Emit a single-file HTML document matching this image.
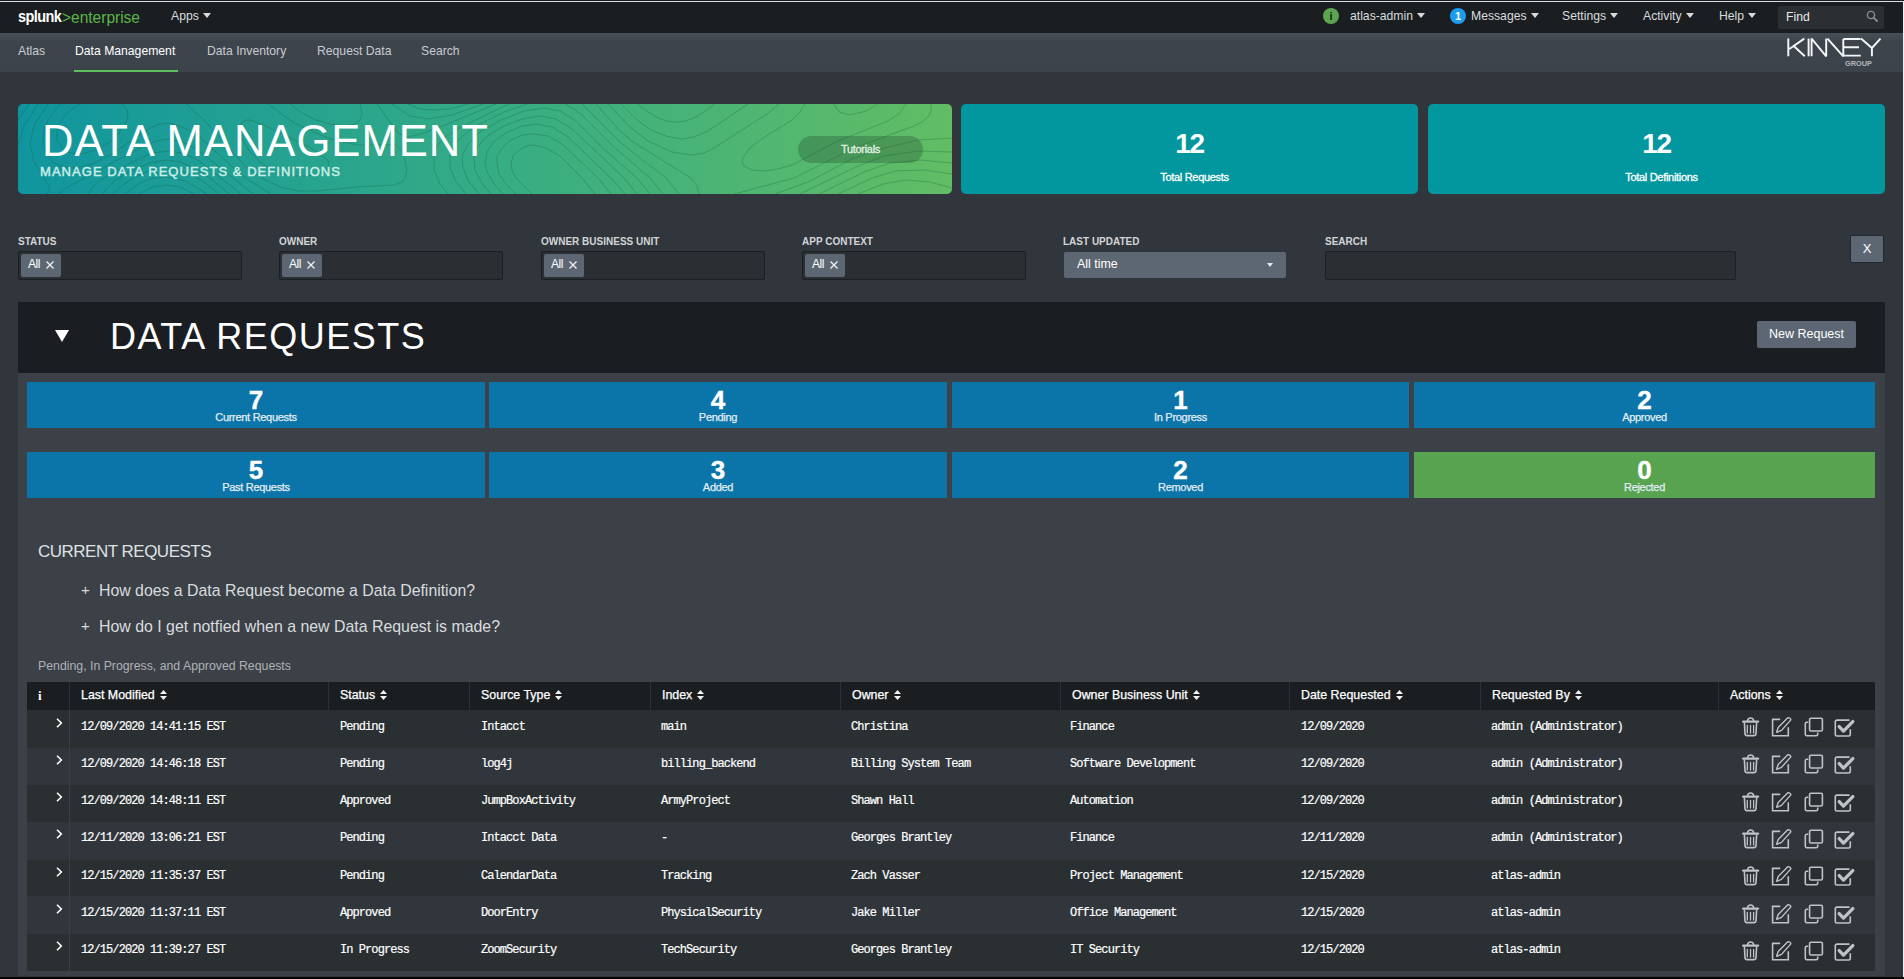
<!DOCTYPE html>
<html><head><meta charset="utf-8">
<style>
*{margin:0;padding:0;box-sizing:border-box}
html,body{width:1904px;height:979px;overflow:hidden;background:#31363c;font-family:"Liberation Sans",sans-serif;color:#fff}
.a{position:absolute;white-space:nowrap}
#topline{position:absolute;left:0;top:0;width:1904px;height:2px;background:#1a1e21}
#topline i{position:absolute;left:0;top:1px;width:1904px;height:1px;background:#dcdfe2}
#rline{position:absolute;left:1903px;top:1px;width:1px;height:976px;background:#eef0f3}
#rline i{display:none}
#botline{position:absolute;left:0;top:977px;width:1904px;height:2px;background:#030303}
#nav{position:absolute;left:0;top:2px;width:1903px;height:31px;background:#1a1e21}
#sub{position:absolute;left:0;top:33px;width:1903px;height:39px;background:linear-gradient(180deg,#464d55 0px,#434a52 5px,#3d444c 8px,#3c434b 100%)}
.nv{font-size:12.2px;color:#d9dcdf}
.caret{display:inline-block;width:0;height:0;border-left:4px solid transparent;border-right:4px solid transparent;border-top:5px solid #d8dadc;vertical-align:middle;margin-left:4px;position:relative;top:-1px}
.sn{font-size:12.2px;color:#c9ccd0;top:44px}
.flab{top:236px;font-size:10px;font-weight:bold;color:#d2d5d8;line-height:11px}
.finp{top:251px;width:224px;height:29px;background:#2b2f33;border:1px solid #1b1e22;border-radius:2px}
.chip{position:absolute;left:2px;top:2px;width:40px;height:23px;background:#5c6773;border-radius:2px;font-size:12px;color:#fff;line-height:20px;padding-left:7px;letter-spacing:-0.4px}
.chip .x{position:absolute;left:25px;top:7px}
.tile{height:46px;background:#0b74a8;text-align:center;color:#fff}
.tn{position:absolute;left:0;width:100%;top:3px;font-size:26px;font-weight:bold;line-height:30px;-webkit-text-stroke:0.4px #fff}
.tl{position:absolute;left:0;width:100%;top:29px;font-size:11px;letter-spacing:-0.3px;line-height:13px;color:#e2eef6;-webkit-text-stroke:0.25px #e2eef6}
.acc{font-size:15px;color:#d9dcdf;line-height:18px}
.th{top:687.5px;font-size:12.4px;color:#fff;line-height:14px;-webkit-text-stroke:0.25px #fff}
.th .si{margin-left:5px;vertical-align:-1px}
.td{font-family:"Liberation Mono",monospace;font-size:12px;letter-spacing:-0.93px;color:#fff;line-height:14px;-webkit-text-stroke:0.2px #fff}
</style></head><body>
<div id="topline"><i></i></div>
<div id="nav"></div>
<div id="sub"></div>

<!-- navbar -->
<div class="a" style="left:18px;top:7px;font-size:14.5px;font-weight:bold;letter-spacing:-0.6px;color:#fff;transform:scaleY(1.12);transform-origin:0 0">splunk</div>
<div class="a" style="left:62px;top:7px;font-size:15.5px;color:#5cb54a;letter-spacing:0px;transform:scaleY(1.12);transform-origin:0 0">&gt;enterprise</div>
<div class="a nv" style="left:171px;top:9px">Apps<span class="caret"></span></div>

<div class="a" style="left:1323px;top:8px;width:16px;height:16px;border-radius:50%;background:#5ca64f;font-size:11px;font-weight:bold;color:#1a1c20;text-align:center;line-height:16px">i</div>
<div class="a nv" style="left:1350px;top:9px">atlas-admin<span class="caret"></span></div>
<div class="a" style="left:1450px;top:8px;width:16px;height:16px;border-radius:50%;background:#1a9cf0;font-size:11px;font-weight:bold;color:#fff;text-align:center;line-height:16px">1</div>
<div class="a nv" style="left:1471px;top:9px">Messages<span class="caret"></span></div>
<div class="a nv" style="left:1562px;top:9px">Settings<span class="caret"></span></div>
<div class="a nv" style="left:1643px;top:9px">Activity<span class="caret"></span></div>
<div class="a nv" style="left:1719px;top:9px">Help<span class="caret"></span></div>
<div class="a" style="left:1778px;top:6px;width:106px;height:23px;background:#2b2f33;border-radius:2px"></div>
<div class="a nv" style="left:1786px;top:10px;color:#e8e8e8">Find</div>
<svg class="a" style="left:1866px;top:10px" width="13" height="12" viewBox="0 0 13 12"><circle cx="5" cy="5" r="3.6" fill="none" stroke="#8a8e93" stroke-width="1.4"/><path d="M7.6 7.6 L11 11" stroke="#8a8e93" stroke-width="1.8" stroke-linecap="round"/></svg>


<!-- kinney logo -->
<svg class="a" style="left:1780px;top:32px" width="110" height="40" viewBox="0 0 110 40" fill="none" stroke="#f4f5f6" stroke-width="1.95" stroke-linejoin="bevel">
<path d="M8.3 6.6 V24.3 M24.3 6.6 L9.3 17 M13.5 13.8 L24.8 24.3"/>
<path d="M28.6 6.6 V24.3"/>
<path d="M31.6 24.3 V6.6 L46.2 24.3 V6.6"/>
<path d="M47.5 6.6 L63.3 24.3 V6.9"/>
<path d="M63.3 6.9 H80.5 M63.3 15.3 H79 M63.3 23.6 H80.8"/>
<path d="M81 6.6 L91.9 16 L100.5 6.6 M91.9 16 V24.3"/>
</svg>
<div class="a" style="left:1845px;top:60px;font-size:7px;font-weight:bold;letter-spacing:0px;color:#b4b8bc;line-height:8px;transform:scaleX(1.05);transform-origin:left">GROUP</div>
<!-- subnav -->
<div class="a sn" style="left:18px">Atlas</div>
<div class="a sn" style="left:75px;color:#fff">Data Management</div>
<div class="a" style="left:74px;top:70px;width:104px;height:2px;background:#5cc05c"></div>
<div class="a sn" style="left:207px">Data Inventory</div>
<div class="a sn" style="left:317px">Request Data</div>
<div class="a sn" style="left:421px">Search</div>

<!-- hero -->
<div class="a" style="left:18px;top:104px;width:934px;height:90px;border-radius:5px;overflow:hidden;background:linear-gradient(90deg,#10959f 0%,#35ac85 50%,#62bd64 100%)">
<svg width="934" height="90" viewBox="0 0 934 90" style="position:absolute;left:0;top:0" fill="none" stroke="rgba(15,85,55,0.28)" stroke-width="1"><path d="M577 90 L564 74 L542 52 L528 44 L516 41 L508 42 L500 47 L495 52 L493 60 L494 66 L498 74 L514 90"/><path d="M176 90 L162 83 L148 81 L134 83 L121 90"/><path d="M593 90 L580 74 L544 40 L530 32 L516 30 L504 31 L493 36 L484 44 L479 52 L479 60 L481 70 L488 80 L498 90"/><path d="M189 90 L168 77 L148 73 L136 74 L126 77 L116 83 L107 90"/><path d="M607 90 L593 74 L549 32 L534 23 L518 20 L504 22 L488 29 L475 38 L469 48 L467 58 L469 68 L476 80 L485 90"/><path d="M201 90 L186 78 L174 71 L160 66 L148 65 L134 66 L119 72 L106 80 L95 90"/><path d="M0 16 L11 0"/><path d="M619 90 L606 74 L553 24 L538 15 L522 12 L504 15 L486 22 L469 32 L460 42 L456 54 L457 66 L463 78 L473 90"/><path d="M211 90 L192 74 L176 64 L162 58 L148 56 L132 59 L114 66 L95 78 L84 90"/><path d="M0 41 L6 22 L20 0"/><path d="M632 90 L619 74 L588 47 L558 17 L542 7 L526 4 L506 7 L483 16 L462 28 L450 40 L444 52 L445 64 L451 78 L461 90"/><path d="M223 90 L180 56 L164 49 L150 47 L134 49 L112 59 L83 76 L74 84 L70 90"/><path d="M28 90 L31 88 L32 84 L16 58 L12 40 L14 30 L17 20 L30 0"/><path d="M509 0 L486 8 L462 20 L447 30 L437 40 L432 52 L432 64 L438 78 L448 90"/><path d="M645 90 L632 74 L596 43 L565 12 L556 5 L547 0"/><path d="M235 90 L180 46 L164 38 L150 35 L138 37 L124 43 L48 84 L42 88 L42 90"/><path d="M253 90 L226 73 L178 30 L164 23 L152 19 L142 20 L132 24 L97 48 L74 60 L56 64 L42 62 L34 57 L29 50 L25 42 L25 34 L26 25 L30 16 L42 0"/><path d="M272 0 L284 9 L298 16 L312 20 L326 22 L336 20 L342 16 L344 10 L342 0"/><path d="M491 0 L441 24 L426 34 L419 42 L416 52 L416 66 L422 80 L430 90"/><path d="M661 90 L648 74 L604 40 L564 0"/><path d="M816 0 L821 8 L832 11 L848 7 L860 0"/><path d="M104 0 L109 6 L110 12 L107 20 L100 30 L92 38 L80 45 L68 49 L58 50 L50 48 L44 44 L39 36 L39 28 L41 20 L46 12 L54 5 L62 0"/><path d="M250 0 L276 19 L310 34 L338 41 L378 41 L383 46 L387 56 L389 66 L387 74 L384 78 L376 81 L338 83 L300 87 L280 87 L262 83 L244 74 L227 62 L188 18 L168 0"/><path d="M478 0 L422 23 L400 31 L388 33 L380 29 L359 0"/><path d="M681 90 L679 82 L673 74 L615 38 L601 26 L578 0"/><path d="M787 0 L782 8 L774 16 L742 36 L732 44 L725 54 L724 58 L726 62 L734 66 L746 67 L760 65 L774 61 L820 37 L870 17 L881 10 L888 0"/><path d="M465 0 L434 11 L410 15 L392 12 L374 0"/><path d="M761 0 L749 10 L696 44 L686 49 L674 51 L654 48 L630 37 L612 23 L590 0"/><path d="M716 90 L776 74 L836 44 L896 22 L904 18 L911 12 L913 6 L913 0"/><path d="M290 72 L276 72 L264 70 L254 66 L242 58 L232 48 L226 38 L222 26 L224 18 L228 16 L232 16 L248 22 L293 44 L310 56 L311 62 L308 66 L300 70 L290 72"/><path d="M450 0 L432 5 L416 6 L402 5 L390 0"/><path d="M730 0 L690 27 L676 33 L664 35 L648 32 L633 26 L619 16 L603 0"/><path d="M757 90 L790 78 L834 55 L858 46 L900 36 L934 34"/><path d="M697 0 L678 13 L668 17 L658 18 L648 17 L638 13 L619 0"/><path d="M782 90 L840 62 L866 52 L900 47 L934 48"/><path d="M801 90 L846 68 L872 59 L902 56 L934 59"/><path d="M820 90 L854 74 L878 67 L906 66 L934 70"/><path d="M840 90 L865 80 L888 76 L912 78 L934 84"/></svg>
</div>
<div class="a" style="left:42px;top:117px;font-size:43.6px;letter-spacing:1px;color:#fff;line-height:48px">DATA MANAGEMENT</div>
<div class="a" style="left:40px;top:164px;font-size:13px;letter-spacing:1.05px;color:#cdeee8;line-height:15px;-webkit-text-stroke:0.45px #cdeee8">MANAGE DATA REQUESTS &amp; DEFINITIONS</div>
<div class="a" style="left:798px;top:136px;width:125px;height:27px;border-radius:14px;background:rgba(30,60,40,0.28)"></div>
<div class="a" style="left:798px;top:143px;width:125px;text-align:center;font-size:11px;letter-spacing:-0.3px;color:#e6f2e6;line-height:13px;-webkit-text-stroke:0.3px #e6f2e6">Tutorials</div>

<!-- cards -->
<div class="a" style="left:961px;top:104px;width:457px;height:90px;border-radius:5px;background:#02979e"></div>
<div class="a" style="left:1428px;top:104px;width:457px;height:90px;border-radius:5px;background:#02979e"></div>
<div class="a" style="left:961px;top:128px;width:457px;text-align:center;font-size:28px;font-weight:bold;letter-spacing:-1.2px;line-height:31px">12</div>
<div class="a" style="left:966px;top:171px;width:457px;text-align:center;font-size:11px;letter-spacing:-0.3px;line-height:13px;-webkit-text-stroke:0.3px #fff">Total Requests</div>
<div class="a" style="left:1428px;top:128px;width:457px;text-align:center;font-size:28px;font-weight:bold;letter-spacing:-1.2px;line-height:31px">12</div>
<div class="a" style="left:1433px;top:171px;width:457px;text-align:center;font-size:11px;letter-spacing:-0.3px;line-height:13px;-webkit-text-stroke:0.3px #fff">Total Definitions</div>

<!-- filters -->
<div class="a flab" style="left:18px">STATUS</div>
<div class="a finp" style="left:18px"><span class="chip">All<svg class="x" width="8" height="8" viewBox="0 0 8 8"><path d="M0.5 0.5 L7.5 7.5 M7.5 0.5 L0.5 7.5" stroke="#f2f2f2" stroke-width="1.3"/></svg></span></div>
<div class="a flab" style="left:279px">OWNER</div>
<div class="a finp" style="left:279px"><span class="chip">All<svg class="x" width="8" height="8" viewBox="0 0 8 8"><path d="M0.5 0.5 L7.5 7.5 M7.5 0.5 L0.5 7.5" stroke="#f2f2f2" stroke-width="1.3"/></svg></span></div>
<div class="a flab" style="left:541px">OWNER BUSINESS UNIT</div>
<div class="a finp" style="left:541px"><span class="chip">All<svg class="x" width="8" height="8" viewBox="0 0 8 8"><path d="M0.5 0.5 L7.5 7.5 M7.5 0.5 L0.5 7.5" stroke="#f2f2f2" stroke-width="1.3"/></svg></span></div>
<div class="a flab" style="left:802px">APP CONTEXT</div>
<div class="a finp" style="left:802px"><span class="chip">All<svg class="x" width="8" height="8" viewBox="0 0 8 8"><path d="M0.5 0.5 L7.5 7.5 M7.5 0.5 L0.5 7.5" stroke="#f2f2f2" stroke-width="1.3"/></svg></span></div>
<div class="a flab" style="left:1063px">LAST UPDATED</div>
<div class="a" style="left:1064px;top:252px;width:222px;height:26px;background:#5c6773;border-radius:2px"></div>
<div class="a" style="left:1077px;top:257px;font-size:12.4px;color:#fff;line-height:14px">All time</div>
<div class="a" style="left:1267px;top:263px;width:0;height:0;border-left:3.5px solid transparent;border-right:3.5px solid transparent;border-top:4px solid #e8e8e8"></div>
<div class="a flab" style="left:1325px">SEARCH</div>
<div class="a" style="left:1325px;top:251px;width:411px;height:29px;background:#2b2f33;border:1px solid #1c1f23;border-radius:2px"></div>
<div class="a" style="left:1850px;top:235px;width:34px;height:28px;background:#5c6773;border:1px solid #23272b;border-radius:2px;font-size:13px;color:#fff;text-align:center;line-height:25px">X</div>

<div id="rline"><i></i></div>
<div id="botline"></div>
<!-- panel -->
<div class="a" style="left:18px;top:302px;width:1867px;height:71px;background:#1a1d21"></div>
<div class="a" style="left:18px;top:373px;width:1867px;height:603px;background:#3c4047"></div>
<div class="a" style="left:55px;top:330px;width:0;height:0;border-left:7px solid transparent;border-right:7px solid transparent;border-top:12px solid #fff"></div>
<div class="a" style="left:110px;top:316px;font-size:36px;color:#fff;line-height:42px;letter-spacing:1.5px">DATA REQUESTS</div>
<div class="a" style="left:1757px;top:321px;width:99px;height:27px;background:#5c6773;border-radius:2px;font-size:12.5px;color:#fff;text-align:center;line-height:27px">New Request</div>
<div class="a tile" style="left:27px;top:382px;width:458px"><div class="tn">7</div><div class="tl">Current Requests</div></div>
<div class="a tile" style="left:489px;top:382px;width:458px"><div class="tn">4</div><div class="tl">Pending</div></div>
<div class="a tile" style="left:952px;top:382px;width:457px"><div class="tn">1</div><div class="tl">In Progress</div></div>
<div class="a tile" style="left:1414px;top:382px;width:461px"><div class="tn">2</div><div class="tl">Approved</div></div>
<div class="a tile" style="left:27px;top:452px;width:458px;background:#0b74a8"><div class="tn">5</div><div class="tl">Past Requests</div></div>
<div class="a tile" style="left:489px;top:452px;width:458px;background:#0b74a8"><div class="tn">3</div><div class="tl">Added</div></div>
<div class="a tile" style="left:952px;top:452px;width:457px;background:#0b74a8"><div class="tn">2</div><div class="tl">Removed</div></div>
<div class="a tile" style="left:1414px;top:452px;width:461px;background:#58a350"><div class="tn">0</div><div class="tl">Rejected</div></div>

<div class="a" style="left:38px;top:542px;font-size:17px;letter-spacing:-0.5px;color:#dfe2e5;line-height:20px">CURRENT REQUESTS</div>
<div class="a acc" style="left:81px;top:581px">+</div>
<div class="a acc" style="left:99px;top:581.5px;font-size:15.85px">How does a Data Request become a Data Definition?</div>
<div class="a acc" style="left:81px;top:617px">+</div>
<div class="a acc" style="left:99px;top:617.5px;font-size:15.9px">How do I get notfied when a new Data Request is made?</div>
<div class="a" style="left:38px;top:659px;font-size:12.3px;color:#aeb2b6;line-height:14px">Pending, In Progress, and Approved Requests</div>

<!-- table -->
<div class="a" style="left:27px;top:682px;width:1848px;height:28px;background:#1a1e21"></div>
<div class="a" style="left:69px;top:682px;width:1px;height:28px;background:#2c3036"></div>
<div class="a th" style="left:81px">Last Modified<svg class="si" width="7" height="10" viewBox="0 0 7 10"><path d="M3.5 0 L7 4 L0 4Z M3.5 10 L7 6 L0 6Z" fill="#f0f0f0"/></svg></div>
<div class="a" style="left:328px;top:682px;width:1px;height:28px;background:#2c3036"></div>
<div class="a th" style="left:340px">Status<svg class="si" width="7" height="10" viewBox="0 0 7 10"><path d="M3.5 0 L7 4 L0 4Z M3.5 10 L7 6 L0 6Z" fill="#f0f0f0"/></svg></div>
<div class="a" style="left:469px;top:682px;width:1px;height:28px;background:#2c3036"></div>
<div class="a th" style="left:481px">Source Type<svg class="si" width="7" height="10" viewBox="0 0 7 10"><path d="M3.5 0 L7 4 L0 4Z M3.5 10 L7 6 L0 6Z" fill="#f0f0f0"/></svg></div>
<div class="a" style="left:650px;top:682px;width:1px;height:28px;background:#2c3036"></div>
<div class="a th" style="left:662px">Index<svg class="si" width="7" height="10" viewBox="0 0 7 10"><path d="M3.5 0 L7 4 L0 4Z M3.5 10 L7 6 L0 6Z" fill="#f0f0f0"/></svg></div>
<div class="a" style="left:840px;top:682px;width:1px;height:28px;background:#2c3036"></div>
<div class="a th" style="left:852px">Owner<svg class="si" width="7" height="10" viewBox="0 0 7 10"><path d="M3.5 0 L7 4 L0 4Z M3.5 10 L7 6 L0 6Z" fill="#f0f0f0"/></svg></div>
<div class="a" style="left:1060px;top:682px;width:1px;height:28px;background:#2c3036"></div>
<div class="a th" style="left:1072px">Owner Business Unit<svg class="si" width="7" height="10" viewBox="0 0 7 10"><path d="M3.5 0 L7 4 L0 4Z M3.5 10 L7 6 L0 6Z" fill="#f0f0f0"/></svg></div>
<div class="a" style="left:1289px;top:682px;width:1px;height:28px;background:#2c3036"></div>
<div class="a th" style="left:1301px">Date Requested<svg class="si" width="7" height="10" viewBox="0 0 7 10"><path d="M3.5 0 L7 4 L0 4Z M3.5 10 L7 6 L0 6Z" fill="#f0f0f0"/></svg></div>
<div class="a" style="left:1480px;top:682px;width:1px;height:28px;background:#2c3036"></div>
<div class="a th" style="left:1492px">Requested By<svg class="si" width="7" height="10" viewBox="0 0 7 10"><path d="M3.5 0 L7 4 L0 4Z M3.5 10 L7 6 L0 6Z" fill="#f0f0f0"/></svg></div>
<div class="a" style="left:1718px;top:682px;width:1px;height:28px;background:#2c3036"></div>
<div class="a th" style="left:1730px">Actions<svg class="si" width="7" height="10" viewBox="0 0 7 10"><path d="M3.5 0 L7 4 L0 4Z M3.5 10 L7 6 L0 6Z" fill="#f0f0f0"/></svg></div>
<div class="a" style="left:38px;top:688px;font-family:'Liberation Serif',serif;font-weight:bold;font-size:13px;color:#fff;line-height:16px">i</div>
<div class="a" style="left:27px;top:710px;width:1848px;height:38px;background:#2a2f32"></div>
<div class="a" style="left:69px;top:710px;width:1px;height:38px;background:#3a3f45"></div>
<svg class="a" style="left:56px;top:717.50px" width="7" height="11" viewBox="0 0 7 11"><path d="M1 0.8 L5.3 5 L1 9.2" fill="none" stroke="#fff" stroke-width="1.6"/></svg>
<div class="a td" style="left:81px;top:719.50px">12/09/2020 14:41:15 EST</div>
<div class="a td" style="left:340px;top:719.50px">Pending</div>
<div class="a td" style="left:481px;top:719.50px">Intacct</div>
<div class="a td" style="left:661px;top:719.50px">main</div>
<div class="a td" style="left:851px;top:719.50px">Christina</div>
<div class="a td" style="left:1070px;top:719.50px">Finance</div>
<div class="a td" style="left:1301px;top:719.50px">12/09/2020</div>
<div class="a td" style="left:1491px;top:719.50px">admin (Administrator)</div>
<svg class="a" style="left:1742px;top:717.00px" width="18" height="20" viewBox="0 0 18 20" fill="none" stroke="#c0c3c6" stroke-width="1.6" stroke-linecap="round"><path d="M1.2 4.6 H16" stroke-width="2.4"/><path d="M5.6 3.8 Q5.8 1 8.6 1 Q11.4 1 11.6 3.8"/><path d="M2.4 6 L3 16.6 Q3.2 18.6 5 18.6 H12 Q13.8 18.6 14 16.6 L14.6 6"/><path d="M5.3 8.3 V16.1 M8.5 8.3 V16.1 M11.6 8.3 V16.1" stroke-width="1.3"/></svg>
<svg class="a" style="left:1771px;top:717.00px" width="21" height="20" viewBox="0 0 21 20" fill="none" stroke="#c0c3c6" stroke-width="1.6"><path d="M9.2 2.4 H1.6 V18.8 H17.3 V10.3"/><path d="M18.6 1.2 Q19.9 1.6 19.8 2.9 L10.5 13.4 L5.6 15.3 L7.2 10.5 L16.5 0.9 Q17.6 0.4 18.6 1.2 Z" stroke-width="1.4" stroke-linejoin="round"/></svg>
<svg class="a" style="left:1804px;top:717.00px" width="20" height="20" viewBox="0 0 20 20" fill="none" stroke="#c0c3c6" stroke-width="1.6"><rect x="5.6" y="1.2" width="12.8" height="12.8" rx="1.3"/><path d="M4.3 5.2 H2.8 Q1.3 5.2 1.3 6.7 V17.2 Q1.3 18.7 2.8 18.7 H12.2 Q13.7 18.7 13.7 17.2 V15.6"/></svg>
<svg class="a" style="left:1834px;top:719.00px" width="21" height="19" viewBox="0 0 21 19" fill="none" stroke="#c0c3c6"><path d="M15.5 1.1 H3 Q1.3 1.1 1.3 2.8 V15.3 Q1.3 17 3 17 H14.6 Q16.3 17 16.3 15.3 V10.3" stroke-width="1.6"/><path d="M5.2 7.6 L9.5 12.1 L18.8 2.6" stroke-width="3.3" stroke-linecap="round" stroke-linejoin="round"/></svg>
<div class="a" style="left:27px;top:748px;width:1848px;height:37px;background:#31363d"></div>
<div class="a" style="left:69px;top:748px;width:1px;height:37px;background:#3a3f45"></div>
<svg class="a" style="left:56px;top:754.80px" width="7" height="11" viewBox="0 0 7 11"><path d="M1 0.8 L5.3 5 L1 9.2" fill="none" stroke="#fff" stroke-width="1.6"/></svg>
<div class="a td" style="left:81px;top:756.80px">12/09/2020 14:46:18 EST</div>
<div class="a td" style="left:340px;top:756.80px">Pending</div>
<div class="a td" style="left:481px;top:756.80px">log4j</div>
<div class="a td" style="left:661px;top:756.80px">billing_backend</div>
<div class="a td" style="left:851px;top:756.80px">Billing System Team</div>
<div class="a td" style="left:1070px;top:756.80px">Software Development</div>
<div class="a td" style="left:1301px;top:756.80px">12/09/2020</div>
<div class="a td" style="left:1491px;top:756.80px">admin (Administrator)</div>
<svg class="a" style="left:1742px;top:754.30px" width="18" height="20" viewBox="0 0 18 20" fill="none" stroke="#c0c3c6" stroke-width="1.6" stroke-linecap="round"><path d="M1.2 4.6 H16" stroke-width="2.4"/><path d="M5.6 3.8 Q5.8 1 8.6 1 Q11.4 1 11.6 3.8"/><path d="M2.4 6 L3 16.6 Q3.2 18.6 5 18.6 H12 Q13.8 18.6 14 16.6 L14.6 6"/><path d="M5.3 8.3 V16.1 M8.5 8.3 V16.1 M11.6 8.3 V16.1" stroke-width="1.3"/></svg>
<svg class="a" style="left:1771px;top:754.30px" width="21" height="20" viewBox="0 0 21 20" fill="none" stroke="#c0c3c6" stroke-width="1.6"><path d="M9.2 2.4 H1.6 V18.8 H17.3 V10.3"/><path d="M18.6 1.2 Q19.9 1.6 19.8 2.9 L10.5 13.4 L5.6 15.3 L7.2 10.5 L16.5 0.9 Q17.6 0.4 18.6 1.2 Z" stroke-width="1.4" stroke-linejoin="round"/></svg>
<svg class="a" style="left:1804px;top:754.30px" width="20" height="20" viewBox="0 0 20 20" fill="none" stroke="#c0c3c6" stroke-width="1.6"><rect x="5.6" y="1.2" width="12.8" height="12.8" rx="1.3"/><path d="M4.3 5.2 H2.8 Q1.3 5.2 1.3 6.7 V17.2 Q1.3 18.7 2.8 18.7 H12.2 Q13.7 18.7 13.7 17.2 V15.6"/></svg>
<svg class="a" style="left:1834px;top:756.30px" width="21" height="19" viewBox="0 0 21 19" fill="none" stroke="#c0c3c6"><path d="M15.5 1.1 H3 Q1.3 1.1 1.3 2.8 V15.3 Q1.3 17 3 17 H14.6 Q16.3 17 16.3 15.3 V10.3" stroke-width="1.6"/><path d="M5.2 7.6 L9.5 12.1 L18.8 2.6" stroke-width="3.3" stroke-linecap="round" stroke-linejoin="round"/></svg>
<div class="a" style="left:27px;top:785px;width:1848px;height:37px;background:#2a2f32"></div>
<div class="a" style="left:69px;top:785px;width:1px;height:37px;background:#3a3f45"></div>
<svg class="a" style="left:56px;top:792.10px" width="7" height="11" viewBox="0 0 7 11"><path d="M1 0.8 L5.3 5 L1 9.2" fill="none" stroke="#fff" stroke-width="1.6"/></svg>
<div class="a td" style="left:81px;top:794.10px">12/09/2020 14:48:11 EST</div>
<div class="a td" style="left:340px;top:794.10px">Approved</div>
<div class="a td" style="left:481px;top:794.10px">JumpBoxActivity</div>
<div class="a td" style="left:661px;top:794.10px">ArmyProject</div>
<div class="a td" style="left:851px;top:794.10px">Shawn Hall</div>
<div class="a td" style="left:1070px;top:794.10px">Automation</div>
<div class="a td" style="left:1301px;top:794.10px">12/09/2020</div>
<div class="a td" style="left:1491px;top:794.10px">admin (Administrator)</div>
<svg class="a" style="left:1742px;top:791.60px" width="18" height="20" viewBox="0 0 18 20" fill="none" stroke="#c0c3c6" stroke-width="1.6" stroke-linecap="round"><path d="M1.2 4.6 H16" stroke-width="2.4"/><path d="M5.6 3.8 Q5.8 1 8.6 1 Q11.4 1 11.6 3.8"/><path d="M2.4 6 L3 16.6 Q3.2 18.6 5 18.6 H12 Q13.8 18.6 14 16.6 L14.6 6"/><path d="M5.3 8.3 V16.1 M8.5 8.3 V16.1 M11.6 8.3 V16.1" stroke-width="1.3"/></svg>
<svg class="a" style="left:1771px;top:791.60px" width="21" height="20" viewBox="0 0 21 20" fill="none" stroke="#c0c3c6" stroke-width="1.6"><path d="M9.2 2.4 H1.6 V18.8 H17.3 V10.3"/><path d="M18.6 1.2 Q19.9 1.6 19.8 2.9 L10.5 13.4 L5.6 15.3 L7.2 10.5 L16.5 0.9 Q17.6 0.4 18.6 1.2 Z" stroke-width="1.4" stroke-linejoin="round"/></svg>
<svg class="a" style="left:1804px;top:791.60px" width="20" height="20" viewBox="0 0 20 20" fill="none" stroke="#c0c3c6" stroke-width="1.6"><rect x="5.6" y="1.2" width="12.8" height="12.8" rx="1.3"/><path d="M4.3 5.2 H2.8 Q1.3 5.2 1.3 6.7 V17.2 Q1.3 18.7 2.8 18.7 H12.2 Q13.7 18.7 13.7 17.2 V15.6"/></svg>
<svg class="a" style="left:1834px;top:793.60px" width="21" height="19" viewBox="0 0 21 19" fill="none" stroke="#c0c3c6"><path d="M15.5 1.1 H3 Q1.3 1.1 1.3 2.8 V15.3 Q1.3 17 3 17 H14.6 Q16.3 17 16.3 15.3 V10.3" stroke-width="1.6"/><path d="M5.2 7.6 L9.5 12.1 L18.8 2.6" stroke-width="3.3" stroke-linecap="round" stroke-linejoin="round"/></svg>
<div class="a" style="left:27px;top:822px;width:1848px;height:38px;background:#31363d"></div>
<div class="a" style="left:69px;top:822px;width:1px;height:38px;background:#3a3f45"></div>
<svg class="a" style="left:56px;top:829.40px" width="7" height="11" viewBox="0 0 7 11"><path d="M1 0.8 L5.3 5 L1 9.2" fill="none" stroke="#fff" stroke-width="1.6"/></svg>
<div class="a td" style="left:81px;top:831.40px">12/11/2020 13:06:21 EST</div>
<div class="a td" style="left:340px;top:831.40px">Pending</div>
<div class="a td" style="left:481px;top:831.40px">Intacct Data</div>
<div class="a td" style="left:661px;top:831.40px">-</div>
<div class="a td" style="left:851px;top:831.40px">Georges Brantley</div>
<div class="a td" style="left:1070px;top:831.40px">Finance</div>
<div class="a td" style="left:1301px;top:831.40px">12/11/2020</div>
<div class="a td" style="left:1491px;top:831.40px">admin (Administrator)</div>
<svg class="a" style="left:1742px;top:828.90px" width="18" height="20" viewBox="0 0 18 20" fill="none" stroke="#c0c3c6" stroke-width="1.6" stroke-linecap="round"><path d="M1.2 4.6 H16" stroke-width="2.4"/><path d="M5.6 3.8 Q5.8 1 8.6 1 Q11.4 1 11.6 3.8"/><path d="M2.4 6 L3 16.6 Q3.2 18.6 5 18.6 H12 Q13.8 18.6 14 16.6 L14.6 6"/><path d="M5.3 8.3 V16.1 M8.5 8.3 V16.1 M11.6 8.3 V16.1" stroke-width="1.3"/></svg>
<svg class="a" style="left:1771px;top:828.90px" width="21" height="20" viewBox="0 0 21 20" fill="none" stroke="#c0c3c6" stroke-width="1.6"><path d="M9.2 2.4 H1.6 V18.8 H17.3 V10.3"/><path d="M18.6 1.2 Q19.9 1.6 19.8 2.9 L10.5 13.4 L5.6 15.3 L7.2 10.5 L16.5 0.9 Q17.6 0.4 18.6 1.2 Z" stroke-width="1.4" stroke-linejoin="round"/></svg>
<svg class="a" style="left:1804px;top:828.90px" width="20" height="20" viewBox="0 0 20 20" fill="none" stroke="#c0c3c6" stroke-width="1.6"><rect x="5.6" y="1.2" width="12.8" height="12.8" rx="1.3"/><path d="M4.3 5.2 H2.8 Q1.3 5.2 1.3 6.7 V17.2 Q1.3 18.7 2.8 18.7 H12.2 Q13.7 18.7 13.7 17.2 V15.6"/></svg>
<svg class="a" style="left:1834px;top:830.90px" width="21" height="19" viewBox="0 0 21 19" fill="none" stroke="#c0c3c6"><path d="M15.5 1.1 H3 Q1.3 1.1 1.3 2.8 V15.3 Q1.3 17 3 17 H14.6 Q16.3 17 16.3 15.3 V10.3" stroke-width="1.6"/><path d="M5.2 7.6 L9.5 12.1 L18.8 2.6" stroke-width="3.3" stroke-linecap="round" stroke-linejoin="round"/></svg>
<div class="a" style="left:27px;top:860px;width:1848px;height:36px;background:#2a2f32"></div>
<div class="a" style="left:69px;top:860px;width:1px;height:36px;background:#3a3f45"></div>
<svg class="a" style="left:56px;top:866.70px" width="7" height="11" viewBox="0 0 7 11"><path d="M1 0.8 L5.3 5 L1 9.2" fill="none" stroke="#fff" stroke-width="1.6"/></svg>
<div class="a td" style="left:81px;top:868.70px">12/15/2020 11:35:37 EST</div>
<div class="a td" style="left:340px;top:868.70px">Pending</div>
<div class="a td" style="left:481px;top:868.70px">CalendarData</div>
<div class="a td" style="left:661px;top:868.70px">Tracking</div>
<div class="a td" style="left:851px;top:868.70px">Zach Vasser</div>
<div class="a td" style="left:1070px;top:868.70px">Project Management</div>
<div class="a td" style="left:1301px;top:868.70px">12/15/2020</div>
<div class="a td" style="left:1491px;top:868.70px">atlas-admin</div>
<svg class="a" style="left:1742px;top:866.20px" width="18" height="20" viewBox="0 0 18 20" fill="none" stroke="#c0c3c6" stroke-width="1.6" stroke-linecap="round"><path d="M1.2 4.6 H16" stroke-width="2.4"/><path d="M5.6 3.8 Q5.8 1 8.6 1 Q11.4 1 11.6 3.8"/><path d="M2.4 6 L3 16.6 Q3.2 18.6 5 18.6 H12 Q13.8 18.6 14 16.6 L14.6 6"/><path d="M5.3 8.3 V16.1 M8.5 8.3 V16.1 M11.6 8.3 V16.1" stroke-width="1.3"/></svg>
<svg class="a" style="left:1771px;top:866.20px" width="21" height="20" viewBox="0 0 21 20" fill="none" stroke="#c0c3c6" stroke-width="1.6"><path d="M9.2 2.4 H1.6 V18.8 H17.3 V10.3"/><path d="M18.6 1.2 Q19.9 1.6 19.8 2.9 L10.5 13.4 L5.6 15.3 L7.2 10.5 L16.5 0.9 Q17.6 0.4 18.6 1.2 Z" stroke-width="1.4" stroke-linejoin="round"/></svg>
<svg class="a" style="left:1804px;top:866.20px" width="20" height="20" viewBox="0 0 20 20" fill="none" stroke="#c0c3c6" stroke-width="1.6"><rect x="5.6" y="1.2" width="12.8" height="12.8" rx="1.3"/><path d="M4.3 5.2 H2.8 Q1.3 5.2 1.3 6.7 V17.2 Q1.3 18.7 2.8 18.7 H12.2 Q13.7 18.7 13.7 17.2 V15.6"/></svg>
<svg class="a" style="left:1834px;top:868.20px" width="21" height="19" viewBox="0 0 21 19" fill="none" stroke="#c0c3c6"><path d="M15.5 1.1 H3 Q1.3 1.1 1.3 2.8 V15.3 Q1.3 17 3 17 H14.6 Q16.3 17 16.3 15.3 V10.3" stroke-width="1.6"/><path d="M5.2 7.6 L9.5 12.1 L18.8 2.6" stroke-width="3.3" stroke-linecap="round" stroke-linejoin="round"/></svg>
<div class="a" style="left:27px;top:896px;width:1848px;height:38px;background:#31363d"></div>
<div class="a" style="left:69px;top:896px;width:1px;height:38px;background:#3a3f45"></div>
<svg class="a" style="left:56px;top:904.00px" width="7" height="11" viewBox="0 0 7 11"><path d="M1 0.8 L5.3 5 L1 9.2" fill="none" stroke="#fff" stroke-width="1.6"/></svg>
<div class="a td" style="left:81px;top:906.00px">12/15/2020 11:37:11 EST</div>
<div class="a td" style="left:340px;top:906.00px">Approved</div>
<div class="a td" style="left:481px;top:906.00px">DoorEntry</div>
<div class="a td" style="left:661px;top:906.00px">PhysicalSecurity</div>
<div class="a td" style="left:851px;top:906.00px">Jake Miller</div>
<div class="a td" style="left:1070px;top:906.00px">Office Management</div>
<div class="a td" style="left:1301px;top:906.00px">12/15/2020</div>
<div class="a td" style="left:1491px;top:906.00px">atlas-admin</div>
<svg class="a" style="left:1742px;top:903.50px" width="18" height="20" viewBox="0 0 18 20" fill="none" stroke="#c0c3c6" stroke-width="1.6" stroke-linecap="round"><path d="M1.2 4.6 H16" stroke-width="2.4"/><path d="M5.6 3.8 Q5.8 1 8.6 1 Q11.4 1 11.6 3.8"/><path d="M2.4 6 L3 16.6 Q3.2 18.6 5 18.6 H12 Q13.8 18.6 14 16.6 L14.6 6"/><path d="M5.3 8.3 V16.1 M8.5 8.3 V16.1 M11.6 8.3 V16.1" stroke-width="1.3"/></svg>
<svg class="a" style="left:1771px;top:903.50px" width="21" height="20" viewBox="0 0 21 20" fill="none" stroke="#c0c3c6" stroke-width="1.6"><path d="M9.2 2.4 H1.6 V18.8 H17.3 V10.3"/><path d="M18.6 1.2 Q19.9 1.6 19.8 2.9 L10.5 13.4 L5.6 15.3 L7.2 10.5 L16.5 0.9 Q17.6 0.4 18.6 1.2 Z" stroke-width="1.4" stroke-linejoin="round"/></svg>
<svg class="a" style="left:1804px;top:903.50px" width="20" height="20" viewBox="0 0 20 20" fill="none" stroke="#c0c3c6" stroke-width="1.6"><rect x="5.6" y="1.2" width="12.8" height="12.8" rx="1.3"/><path d="M4.3 5.2 H2.8 Q1.3 5.2 1.3 6.7 V17.2 Q1.3 18.7 2.8 18.7 H12.2 Q13.7 18.7 13.7 17.2 V15.6"/></svg>
<svg class="a" style="left:1834px;top:905.50px" width="21" height="19" viewBox="0 0 21 19" fill="none" stroke="#c0c3c6"><path d="M15.5 1.1 H3 Q1.3 1.1 1.3 2.8 V15.3 Q1.3 17 3 17 H14.6 Q16.3 17 16.3 15.3 V10.3" stroke-width="1.6"/><path d="M5.2 7.6 L9.5 12.1 L18.8 2.6" stroke-width="3.3" stroke-linecap="round" stroke-linejoin="round"/></svg>
<div class="a" style="left:27px;top:934px;width:1848px;height:37px;background:#2a2f32"></div>
<div class="a" style="left:69px;top:934px;width:1px;height:37px;background:#3a3f45"></div>
<svg class="a" style="left:56px;top:941.30px" width="7" height="11" viewBox="0 0 7 11"><path d="M1 0.8 L5.3 5 L1 9.2" fill="none" stroke="#fff" stroke-width="1.6"/></svg>
<div class="a td" style="left:81px;top:943.30px">12/15/2020 11:39:27 EST</div>
<div class="a td" style="left:340px;top:943.30px">In Progress</div>
<div class="a td" style="left:481px;top:943.30px">ZoomSecurity</div>
<div class="a td" style="left:661px;top:943.30px">TechSecurity</div>
<div class="a td" style="left:851px;top:943.30px">Georges Brantley</div>
<div class="a td" style="left:1070px;top:943.30px">IT Security</div>
<div class="a td" style="left:1301px;top:943.30px">12/15/2020</div>
<div class="a td" style="left:1491px;top:943.30px">atlas-admin</div>
<svg class="a" style="left:1742px;top:940.80px" width="18" height="20" viewBox="0 0 18 20" fill="none" stroke="#c0c3c6" stroke-width="1.6" stroke-linecap="round"><path d="M1.2 4.6 H16" stroke-width="2.4"/><path d="M5.6 3.8 Q5.8 1 8.6 1 Q11.4 1 11.6 3.8"/><path d="M2.4 6 L3 16.6 Q3.2 18.6 5 18.6 H12 Q13.8 18.6 14 16.6 L14.6 6"/><path d="M5.3 8.3 V16.1 M8.5 8.3 V16.1 M11.6 8.3 V16.1" stroke-width="1.3"/></svg>
<svg class="a" style="left:1771px;top:940.80px" width="21" height="20" viewBox="0 0 21 20" fill="none" stroke="#c0c3c6" stroke-width="1.6"><path d="M9.2 2.4 H1.6 V18.8 H17.3 V10.3"/><path d="M18.6 1.2 Q19.9 1.6 19.8 2.9 L10.5 13.4 L5.6 15.3 L7.2 10.5 L16.5 0.9 Q17.6 0.4 18.6 1.2 Z" stroke-width="1.4" stroke-linejoin="round"/></svg>
<svg class="a" style="left:1804px;top:940.80px" width="20" height="20" viewBox="0 0 20 20" fill="none" stroke="#c0c3c6" stroke-width="1.6"><rect x="5.6" y="1.2" width="12.8" height="12.8" rx="1.3"/><path d="M4.3 5.2 H2.8 Q1.3 5.2 1.3 6.7 V17.2 Q1.3 18.7 2.8 18.7 H12.2 Q13.7 18.7 13.7 17.2 V15.6"/></svg>
<svg class="a" style="left:1834px;top:942.80px" width="21" height="19" viewBox="0 0 21 19" fill="none" stroke="#c0c3c6"><path d="M15.5 1.1 H3 Q1.3 1.1 1.3 2.8 V15.3 Q1.3 17 3 17 H14.6 Q16.3 17 16.3 15.3 V10.3" stroke-width="1.6"/><path d="M5.2 7.6 L9.5 12.1 L18.8 2.6" stroke-width="3.3" stroke-linecap="round" stroke-linejoin="round"/></svg>

</body></html>
